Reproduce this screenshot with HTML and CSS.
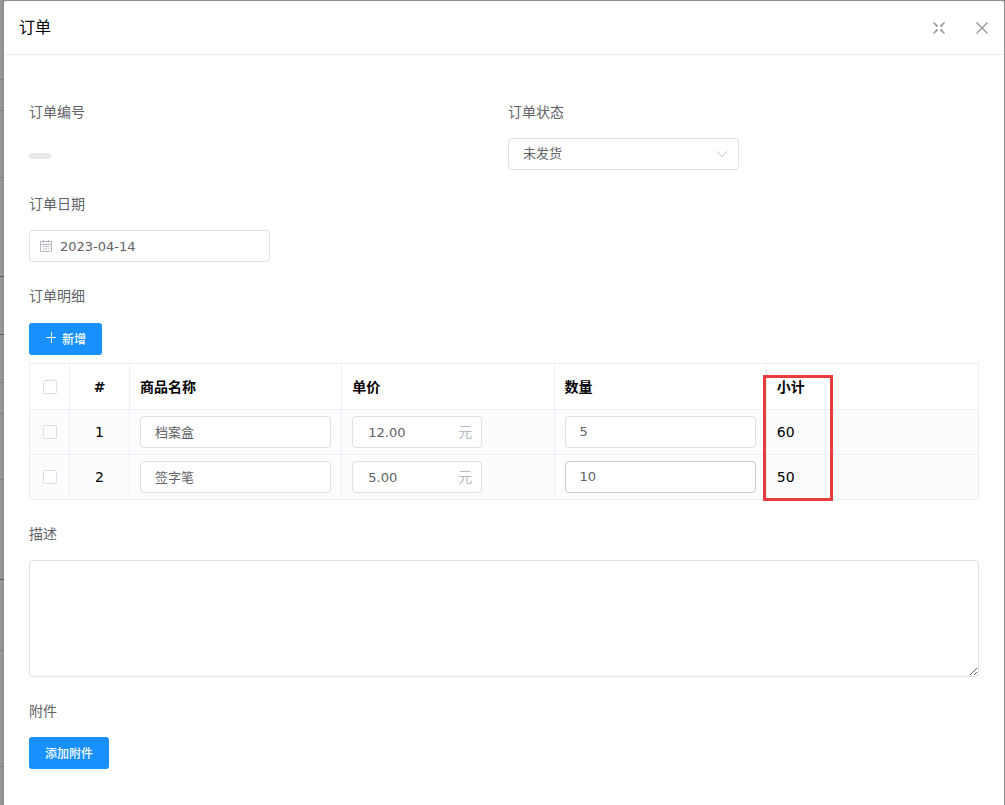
FILE: index.html
```html
<!DOCTYPE html>
<html lang="zh-CN">
<head>
<meta charset="utf-8">
<meta name="viewport" content="width=device-width, initial-scale=1">
<title>订单</title>
<link rel="stylesheet" href="styles.css">
</head>
<body>
<main class="dialog">
  <header class="dialog-header">
    <h1 class="dialog-title">订单</h1>
    <div class="dialog-tools">
      <button class="icon-button" type="button" aria-label="全屏">
        <svg width="14" height="14" viewBox="0 0 14 14" fill="none" stroke="currentColor" stroke-width="1.4">
          <path d="M1.5 1.5 5.5 5.5M12.5 1.5 8.5 5.5M1.5 12.5 5.5 8.5M12.5 12.5 8.5 8.5"/>
          <path d="M3.2 5.2h2v-2M10.8 5.2h-2v-2M3.2 8.8h2v2M10.8 8.8h-2v2" stroke-width="0.6"/>
        </svg>
      </button>
      <button class="icon-button" type="button" aria-label="关闭">
        <svg width="14" height="14" viewBox="0 0 14 14" fill="none" stroke="currentColor" stroke-width="1.2"><path d="M1.5 1.5l11 11M12.5 1.5l-11 11"/></svg>
      </button>
    </div>
  </header>
  <form class="form">
    <div class="form-row">
      <div class="field">
        <span class="label">订单编号</span>
        <div class="control"><span class="empty-tag"></span></div>
      </div>
      <div class="field">
        <label class="label" for="status">订单状态</label>
        <div class="select-box">
          <select class="select" id="status"><option>未发货</option></select>
          <svg class="select-arrow" width="12" height="12" viewBox="0 0 12 12" fill="none" stroke="currentColor"><path d="M1 3.5l5 5 5-5"/></svg>
        </div>
      </div>
    </div>
    <div class="field">
      <label class="label" for="date">订单日期</label>
      <div class="input-box date-box">
        <svg class="date-icon" width="12" height="12" viewBox="0 0 12 12" fill="none" stroke="currentColor">
          <path d="M.5 1.5h11v10H.5zM.5 4.5h11M3.5 0v3M8.5 0v3"/>
          <path d="M2.5 6.5h7M2.5 9h7" stroke-dasharray="2 .5"/>
        </svg>
        <input class="bare-input" id="date" type="text" value="2023-04-14">
      </div>
    </div>
    <div class="field">
      <span class="label">订单明细</span>
      <div class="details">
        <button class="button" type="button">
          <svg width="12" height="12" viewBox="0 0 12 12" fill="none" stroke="currentColor"><path d="M1 5.5h10M6.5 0v11"/></svg>
          <span>新增</span>
        </button>
        <div class="table-box">
          <table class="table">
            <colgroup><col class="col-check"><col class="col-index"><col><col><col><col></colgroup>
            <thead>
              <tr>
                <th class="center"><input class="check" type="checkbox" aria-label="全选"></th>
                <th class="center">#</th>
                <th>商品名称</th>
                <th>单价</th>
                <th>数量</th>
                <th>小计</th>
              </tr>
            </thead>
            <tbody>
              <tr>
                <td class="center"><input class="check" type="checkbox" aria-label="选择第 1 行"></td>
                <td class="center">1</td>
                <td><input class="input" type="text" value="档案盒" aria-label="商品名称"></td>
                <td><label class="input-box price-box"><input class="bare-input" type="text" value="12.00" aria-label="单价"><span class="unit">元</span></label></td>
                <td><input class="input" type="text" value="5" aria-label="数量"></td>
                <td>60</td>
              </tr>
              <tr>
                <td class="center"><input class="check" type="checkbox" aria-label="选择第 2 行"></td>
                <td class="center">2</td>
                <td><input class="input" type="text" value="签字笔" aria-label="商品名称"></td>
                <td><label class="input-box price-box"><input class="bare-input" type="text" value="5.00" aria-label="单价"><span class="unit">元</span></label></td>
                <td><input class="input input-hover" type="text" value="10" aria-label="数量"></td>
                <td>50</td>
              </tr>
            </tbody>
          </table>
          <div class="highlight"></div>
        </div>
      </div>
    </div>
    <div class="field">
      <label class="label" for="desc">描述</label>
      <textarea class="textarea" id="desc"></textarea>
    </div>
    <div class="field">
      <span class="label">附件</span>
      <button class="button" type="button">添加附件</button>
    </div>
  </form>
</main>
</body>
</html>
```
FILE: styles.css
```css
* { box-sizing: border-box; }

body {
  margin: 0;
  padding: 1px 1px 0 4px;
  min-height: 100vh;
  display: flex;
  background:
    linear-gradient(#7e7c7b, #7e7c7b) 0 79px / 4px 1px no-repeat,
    linear-gradient(#7e7c7b, #7e7c7b) 0 110px / 4px 1px no-repeat,
    linear-gradient(#7e7c7b, #7e7c7b) 0 177px / 4px 1px no-repeat,
    linear-gradient(#5c5a5a, #5c5a5a) 0 276px / 4px 1px no-repeat,
    linear-gradient(#5c5a5a, #5c5a5a) 0 334px / 4px 1px no-repeat,
    linear-gradient(#7e7c7b, #7e7c7b) 0 382px / 4px 1px no-repeat,
    linear-gradient(#7e7c7b, #7e7c7b) 0 413px / 4px 1px no-repeat,
    linear-gradient(#7e7c7b, #7e7c7b) 0 479px / 4px 1px no-repeat,
    linear-gradient(#5c5a5a, #5c5a5a) 0 579px / 4px 1px no-repeat,
    linear-gradient(#7e7c7b, #7e7c7b) 0 650px / 4px 1px no-repeat,
    linear-gradient(#7e7c7b, #7e7c7b) 0 766px / 4px 1px no-repeat,
    linear-gradient(to right, #9c9a98, #8f8d8c 4px);
  font-family: "DejaVu Sans", "Noto Sans CJK SC", sans-serif;
  font-size: 14px;
  line-height: 20px;
  color: #606266;
}

input, select, textarea, button {
  font-family: inherit;
  font-size: 13px;
  color: #606266;
  margin: 0;
}

.dialog {
  flex: 1;
  min-width: 0;
  background: #fff;
  border-radius: 2px 2px 0 0;
}

.dialog-header {
  display: flex;
  align-items: center;
  justify-content: space-between;
  height: 54px;
  padding: 0 15px;
  border-bottom: 1px solid #ebebeb;
}

.dialog-title {
  margin: 0;
  font-size: 16px;
  font-weight: 400;
  color: #000;
}

.dialog-tools { display: flex; gap: 29px; }

.icon-button {
  display: flex;
  padding: 0;
  border: 0;
  background: none;
  color: #909399;
}

.form {
  display: flex;
  flex-direction: column;
  gap: 24px;
  padding: 47px 25px 35px;
}

.form-row {
  display: grid;
  grid-template-columns: 1fr 1fr;
  gap: 8px;
}

.field {
  display: flex;
  flex-direction: column;
  align-items: flex-start;
  gap: 16px;
}

.label { line-height: 20px; }

.control {
  display: flex;
  align-items: center;
  height: 32px;
  padding-top: 4px;
}

.empty-tag {
  width: 22px;
  height: 6px;
  border-radius: 3px;
  background: #e8e8e8;
}

.input, .input-box, .select, .textarea {
  border: 1px solid #dcdfe6;
  border-radius: 4px;
  background: #fff;
}

.input, .select {
  display: block;
  width: 100%;
  height: 32px;
  padding: 0 14px 2px;
}

.input-hover { border-color: #c6cad1; }

.input-box {
  display: flex;
  align-items: center;
  height: 32px;
}

.bare-input {
  flex: 1;
  min-width: 0;
  padding: 0;
  border: 0;
  background: none;
}

.select-box {
  position: relative;
  width: 231px;
}

.select { appearance: none; }

.select-arrow {
  position: absolute;
  top: 10px;
  right: 11px;
  color: #b4b8c0;
  pointer-events: none;
}

.date-box {
  width: 241px;
  gap: 8px;
  padding: 0 10px;
}

.date-icon { color: #b4b8c0; }

.price-box {
  width: 130px;
  padding: 0 9px 0 15px;
}

.unit { color: #b4b8c0; }

.details {
  display: flex;
  flex-direction: column;
  align-items: flex-start;
  gap: 8px;
  width: 100%;
  padding-top: 1px;
}

.button {
  display: flex;
  align-items: center;
  gap: 5px;
  height: 32px;
  padding: 0 16px 2px;
  border: 0;
  border-radius: 3px;
  background: #1890ff;
  color: #fff;
  font-size: 12px;
  font-weight: 500;
}

.table-box {
  position: relative;
  width: 100%;
}

.table {
  width: 100%;
  table-layout: fixed;
  border-collapse: collapse;
  color: #000;
}

.col-check { width: 40px; }
.col-index { width: 60px; }

.table th, .table td {
  height: 45px;
  padding: 0 10px;
  border: 1px solid #ebeef2;
  text-align: left;
}

.table th { height: 46px; }
.table tbody { background: #fafcfe; }
.table .center { padding: 0; text-align: center; }

.check {
  appearance: none;
  display: block;
  width: 14px;
  height: 14px;
  margin: 0 auto;
  border: 1px solid #dcdfe6;
  border-radius: 2px;
  background: #fff;
}

.highlight {
  position: absolute;
  top: 12px;
  right: 146px;
  bottom: -1px;
  width: 70px;
  border: 3px solid #e63b3f;
  pointer-events: none;
}

.textarea {
  display: block;
  width: 100%;
  height: 117px;
  padding: 5px 15px;
  resize: vertical;
}
```
